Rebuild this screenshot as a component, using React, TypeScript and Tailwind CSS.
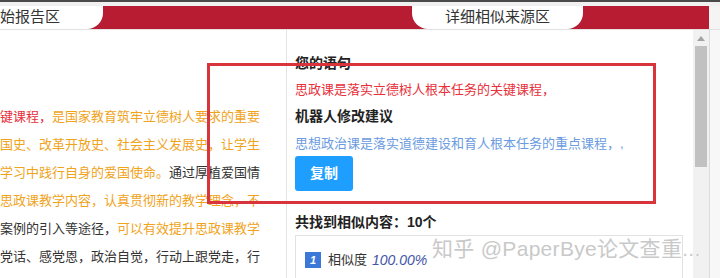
import React from 'react';

const ORANGE = 'text-[#f0a31c]';
const DARK = 'text-[#333333]';

type Seg = { text: string; color: string };

const reportLines: Seg[][] = [
  [
    { text: '键课程，', color: 'text-[#e8303a]' },
    { text: '是国家教育筑牢立德树人要求的重要', color: ORANGE },
  ],
  [{ text: '国史、改革开放史、社会主义发展史，让学生', color: ORANGE }],
  [
    { text: '学习中践行自身的爱国使命。', color: ORANGE },
    { text: '通过厚植爱国情', color: DARK },
  ],
  [{ text: '思政课教学内容，认真贯彻新的教学理念，不', color: ORANGE }],
  [
    { text: '案例的引入等途径，', color: DARK },
    { text: '可以有效提升思政课教学', color: ORANGE },
  ],
  [{ text: '党话、感党恩，政治自觉，行动上跟党走，行', color: DARK }],
];

const App: React.FC = () => {
  return (
    <div
      className="relative w-[720px] h-[278px] overflow-hidden bg-white"
      style={{ fontFamily: '"Liberation Sans", "Noto Sans CJK SC", sans-serif' }}
    >
      {/* 顶部窗口边 */}
      <div className="h-[2px] bg-[#4a4a4a]" />
      <div className="h-[4px] bg-[#f0f0f0]" />

      {/* 标签栏 */}
      <div className="flex h-[23px]">
        <div className="flex w-[709px] bg-[#b71c32]">
          <div className="flex w-[103px] items-center rounded-br-[16px] bg-white text-[15px] text-[#333]">
            始报告区
          </div>
          <div className="ml-[309px] flex w-[171px] items-center justify-center rounded-b-[16px] bg-white text-[15px] text-[#333]">
            详细相似来源区
          </div>
        </div>
        <div className="flex-1 bg-[#f4f4f4]" />
      </div>
      <div className="h-[1px] bg-[#e2e2e2]" />

      {/* 主体 */}
      <div className="flex h-[248px]">
        {/* 原始报告区 */}
        <div className="w-[287px] shrink-0 overflow-hidden border-r border-[#e4e4e4] pt-[73px] pr-[28px]">
          {reportLines.map((line, i) => (
            <div key={i} className="h-[28px] whitespace-nowrap text-right text-[13px] leading-[28px]">
              {line.map((seg, j) => (
                <span key={j} className={seg.color}>
                  {seg.text}
                </span>
              ))}
            </div>
          ))}
        </div>

        {/* 详细相似来源区 */}
        <div className="w-[406px] shrink-0 pl-[8px] pt-[23px]">
          <div className="h-[20px] text-[14px] font-bold leading-[20px] text-[#222]">您的语句</div>
          <div className="mt-[7px] h-[20px] text-[13px] leading-[20px] text-[#e8303a]">
            思政课是落实立德树人根本任务的关键课程，
          </div>
          <div className="mt-[6px] h-[20px] text-[14px] font-bold leading-[20px] text-[#222]">机器人修改建议</div>
          <div className="mt-[8px] h-[20px] text-[13px] leading-[20px] text-[#6b9be0]">
            思想政治课是落实道德建设和育人根本任务的重点课程，,
          </div>
          <button className="mt-[2px] flex h-[35px] w-[58px] items-center justify-center rounded-[3px] bg-[#1e9fff] text-[14px] font-bold text-white">
            复制
          </button>
          <div className="mt-[21px] h-[20px] text-[14px] font-bold leading-[20px] text-[#222]">
            共找到相似内容：10个
          </div>
          <div className="mt-[3px] h-[60px] w-[388px] border border-[#e2e2e2] pl-[9px] pt-[16px]">
            <div className="flex h-[16px] items-center">
              <span className="flex h-[16px] w-[16px] items-center justify-center bg-[#3c78d8] text-[11px] font-bold italic text-white">
                1
              </span>
              <span className="ml-[7px] text-[13px] text-[#333]">相似度</span>
              <span className="ml-[5px] text-[14px] italic text-[#4355a8]">100.00%</span>
            </div>
          </div>
        </div>

        {/* 滚动条 */}
        <div className="flex w-[16px] shrink-0 flex-col items-center bg-[#f1f1f1]">
          <div className="flex h-[16px] items-center justify-center">
            <svg width="8" height="5" viewBox="0 0 8 5">
              <path d="M4 0 L8 5 L0 5 Z" fill="#a3a3a3" />
            </svg>
          </div>
          <div className="h-[121px] w-[12px] bg-[#c1c1c1]" />
        </div>
        <div className="flex-1 border-l border-[#dcdcdc] bg-[#f7f7f7]" />
      </div>

      {/* 红色标注框 */}
      <div className="absolute left-[207px] top-[63px] h-[141px] w-[449px] border-[3px] border-[#d9333b]" />

      {/* 水印 */}
      <div
        className="absolute left-[432px] top-[233px] whitespace-nowrap text-[21px] tracking-[0.3px] text-[#c9c9c9]"
        style={{ textShadow: '0 0 2px #fff, 0 0 1px #fff' }}
      >
        知乎 @PaperBye论文查重...
      </div>
    </div>
  );
};

export default App;
